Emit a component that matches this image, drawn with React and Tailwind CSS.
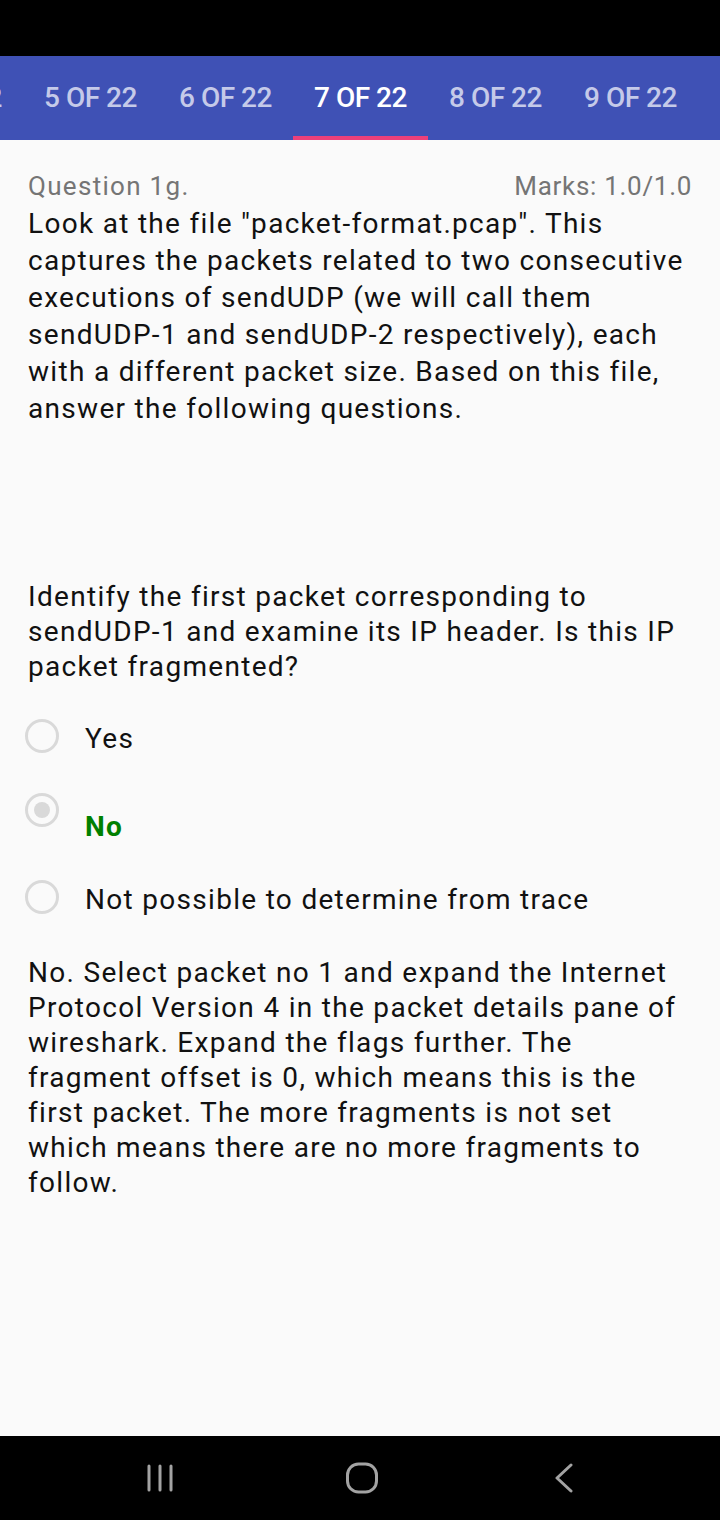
import React from 'react'

const tabs = ['4 OF 22', '5 OF 22', '6 OF 22', '7 OF 22', '8 OF 22', '9 OF 22']

function Radio({ checked }) {
  return (
    <span className="flex h-[34px] w-[34px] shrink-0 items-center justify-center rounded-full border-[3px] border-[#d9d9d9]">
      {checked ? <span className="h-[16px] w-[16px] rounded-full bg-[#d9d9d9]" /> : null}
    </span>
  )
}

export default function App() {
  return (
    <div className="flex h-[1520px] w-[720px] flex-col bg-[#fafafa] font-['Roboto',sans-serif]">
      <div className="h-[56px] bg-black" />
      <div className="flex h-[84px] overflow-hidden bg-[#3f51b5]">
        <div className="-ml-[112px] flex">
          {tabs.map((t) => (
            <div key={t} className="relative flex h-[84px] w-[135px] shrink-0 items-center justify-center">
              <span className={`text-[28px] font-medium tracking-[-0.5px] ${t === '7 OF 22' ? 'text-white' : 'text-[#c5cae9]'}`}>{t}</span>
              {t === '7 OF 22' ? <span className="absolute bottom-0 left-0 h-[4px] w-full bg-[#ec407a]" /> : null}
            </div>
          ))}
        </div>
      </div>

      <main className="flex-1 px-[28px] pt-[30px] tracking-[1.3px]">
        <div className="flex items-center justify-between text-[26px] leading-[32px] text-[#757575]">
          <span>Question 1g.</span>
          <span className="tracking-[0.7px]">Marks: 1.0/1.0</span>
        </div>
        <p className="mt-[3px] text-[28px] leading-[37px] text-[#111]">
          Look at the file "packet-format.pcap". This captures the packets related to two consecutive executions of sendUDP (we will call them sendUDP-1 and sendUDP-2 respectively), each with a different packet size. Based on this file, answer the following questions.
        </p>

        <p className="mt-[152px] text-[28px] leading-[35px] text-[#111]">
          Identify the first packet corresponding to sendUDP-1 and examine its IP header. Is this IP packet fragmented?
        </p>

        <div className="-ml-[3px] mt-[35px] flex flex-col">
          <div className="flex items-start gap-[26px]">
            <Radio />
            <span className="mt-[2px] text-[28px] leading-[36px] text-[#111]">Yes</span>
          </div>
          <div className="mt-[36px] flex items-start gap-[26px]">
            <Radio checked />
            <span className="mt-[16px] text-[28px] font-bold leading-[36px] text-[#008000]">No</span>
          </div>
          <div className="mt-[35px] flex items-start gap-[26px]">
            <Radio />
            <span className="mt-[2px] text-[28px] leading-[36px] text-[#111]">Not possible to determine from trace</span>
          </div>
        </div>

        <p className="mt-[37px] text-[28px] leading-[35px] text-[#111]">
          No. Select packet no 1 and expand the Internet Protocol Version 4 in the packet details pane of wireshark. Expand the flags further. The fragment offset is 0, which means this is the first packet. The more fragments is not set which means there are no more fragments to follow.
        </p>
      </main>

      <div className="flex h-[84px] items-center gap-[142px] bg-black pl-[130px]">
        <div className="flex w-[60px] justify-center">
          <svg width="30" height="28" viewBox="0 0 30 28">
            <g stroke="#a3a3a3" strokeWidth="3" strokeLinecap="round">
              <line x1="4" y1="2" x2="4" y2="26" />
              <line x1="15" y1="2" x2="15" y2="26" />
              <line x1="26" y1="2" x2="26" y2="26" />
            </g>
          </svg>
        </div>
        <div className="flex w-[60px] justify-center">
          <svg width="32" height="32" viewBox="0 0 32 32">
            <rect x="1.5" y="2" width="29" height="28" rx="11" fill="none" stroke="#a3a3a3" strokeWidth="3" />
          </svg>
        </div>
        <div className="flex w-[60px] justify-center">
          <svg width="20" height="30" viewBox="0 0 20 30">
            <polyline points="17,2 3,15 17,28" fill="none" stroke="#a3a3a3" strokeWidth="3" strokeLinecap="round" strokeLinejoin="round" />
          </svg>
        </div>
      </div>
    </div>
  )
}
